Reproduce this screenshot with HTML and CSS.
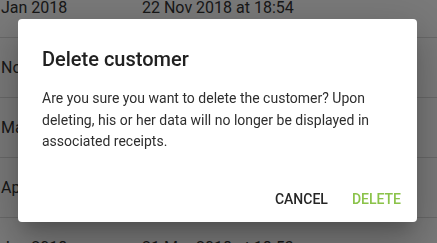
FILE: index.html
```html
<!DOCTYPE html>
<html lang="en">
<head>
<meta charset="utf-8">
<title>Delete customer</title>
<link rel="stylesheet" href="styles.css">
</head>
<body>
<div class="list">
  <div class="row"><span class="c1">Jan 2018</span><span class="c2">22 Nov 2018 at 18:54</span></div>
  <div class="row"><span class="c1">Nov 2018</span><span class="c2">12 Nov 2018 at 10:21</span></div>
  <div class="row"><span class="c1">Mar 2018</span><span class="c2">04 Apr 2018 at 09:12</span></div>
  <div class="row"><span class="c1">Apr 2018</span><span class="c2">30 Mar 2018 at 14:40</span></div>
  <div class="row"><span class="c1">Jan 2018</span><span class="c2">21 Mar 2018 at 18:53</span></div>
</div>
<div class="overlay"></div>
<div class="dialog" role="dialog">
  <h2 class="title">Delete customer</h2>
  <p class="content">Are you sure you want to delete the customer? Upon deleting, his or her data will no longer be displayed in associated receipts.</p>
  <div class="actions">
    <button class="btn">Cancel</button>
    <button class="btn primary">Delete</button>
  </div>
</div>
</body>
</html>
```

FILE: styles.css
```css
html, body {
  margin: 0;
  padding: 0;
  width: 437px;
  height: 243px;
  overflow: hidden;
  background: #ffffff;
  font-family: Roboto, "Liberation Sans", sans-serif;
}

.list {
  margin-top: -22px;
}

.row {
  height: 60px;
  box-sizing: border-box;
  border-bottom: 1px solid #dcdcdc;
  display: flex;
  align-items: center;
  font-size: 16px;
  color: #333333;
}

.c1 {
  width: 141px;
  padding-left: 1px;
  white-space: nowrap;
}

.c2 {
  white-space: nowrap;
}

.overlay {
  position: fixed;
  inset: 0;
  background: rgba(0, 0, 0, 0.52);
}

.dialog {
  position: absolute;
  left: 18px;
  top: 19px;
  width: 399px;
  height: 203px;
  box-sizing: border-box;
  background: #ffffff;
  border-radius: 4px;
  box-shadow: 0 11px 15px -7px rgba(0,0,0,0.2), 0 24px 38px 3px rgba(0,0,0,0.14), 0 9px 46px 8px rgba(0,0,0,0.12);
  display: flex;
  flex-direction: column;
}

.title {
  margin: 0;
  padding: 24px 24px 0;
  font-size: 20px;
  font-weight: 500;
  line-height: 32px;
  color: #212121;
}

.content {
  margin: 0;
  padding: 13px 24px 0;
  font-size: 14px;
  line-height: 21.5px;
  color: #2e2e2e;
  flex: 1;
}

.actions {
  display: flex;
  justify-content: flex-end;
  gap: 8px;
  padding: 8px 8px 5px;
}

.btn {
  border: 0;
  background: transparent;
  font-family: Roboto, "Liberation Sans", sans-serif;
  font-size: 14px;
  font-weight: 500;
  text-transform: uppercase;
  height: 36px;
  min-width: 64px;
  padding: 0 8px;
  color: #262626;
  border-radius: 2px;
}

.btn.primary {
  color: #8bc34a;
}
```
